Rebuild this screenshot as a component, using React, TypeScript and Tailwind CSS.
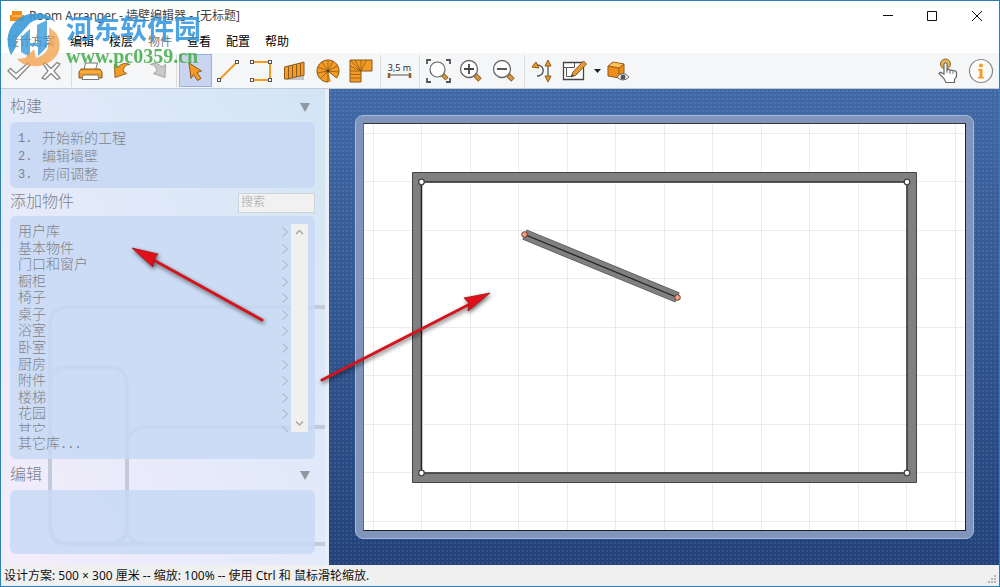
import { ReactNode } from 'react';

interface ToolProps {
  label: string;
  active?: boolean;
  children: ReactNode;
}

const Tool = ({ label, active, children }: ToolProps) => (
  <button
    type="button"
    aria-label={label}
    className={`h-[33px] w-[33px] shrink-0 ${active ? 'border border-[#98b1e0] bg-[#c9d5f0]' : 'border border-transparent'}`}
  >
    <svg viewBox="1 1 31 31" className="h-[31px] w-[31px]" fill="none">
      {children}
    </svg>
  </button>
);

const Separator = () => (
  <span className="flex w-[6px] shrink-0 justify-center">
    <span className="h-8 w-px bg-[#dcdcdc]" />
  </span>
);

const Magnifier = ({ children }: { children?: ReactNode }) => (
  <>
    <path d="M20 21l5 5" stroke="#8b6327" strokeWidth="5" />
    <path d="M20.5 21.5l4 4" stroke="#d99a3a" strokeWidth="3" />
    <circle cx="14" cy="15" r="8.5" fill="#fdfdfd" stroke="#666" strokeWidth="1.3" />
    {children}
  </>
);

const Toolbar = () => (
  <div className="flex h-9 items-center border-b border-[#c3cbd6] bg-[#f5f6f8] pl-px pr-[2px]">
    <Tool label="确定">
      <path d="M6 17l2.500-2.500 5.500 5L26 9l2 2-13.500 14z" fill="#fff" stroke="#888" strokeWidth="1.300" />
    </Tool>
    <Tool label="取消">
      <path d="M8 10l2-1.500 6 6 6-6 3 1.500-6 7 6 7-3 1.500-6-6-6 6-3-1.500 6-7z" fill="#fff" stroke="#888" strokeWidth="1.300" />
    </Tool>
    <Separator />
    <Tool label="打印">
      <path d="M10 16l1.500-7h12l-2 7z" fill="#fff" stroke="#777" />
      <path d="M7 15h19l2 3v6H5v-6z" fill="#f59a23" stroke="#8a5a1c" />
      <path d="M9 21h15l1 4.500H8z" fill="#fff" stroke="#777" />
      <path d="M6 18h21" stroke="#ffc266" />
    </Tool>
    <Tool label="撤销">
      <path d="M7.500 10.500l3.500 2.500c3.500-3.500 7-4.500 12-2.500-4 0-6 2-7 6.500l3.500 2.500L8 23.500z" fill="#f59a23" stroke="#9a6420" />
    </Tool>
    <Tool label="重做">
      <path d="M25.500 10.500L22 13c-3.500-3.500-7-4.500-12-2.500 4 0 6 2 7 6.500l-3.500 2.500L25 23.500z" fill="#c9c9c9" stroke="#a5a5a5" />
    </Tool>
    <Separator />
    <Tool label="选择" active>
      <path d="M10 9l12.500 8-4.500 1.500 4 6-3.500 2-4-6-2.500 4z" fill="#f59a23" stroke="#8a5a1c" />
    </Tool>
    <Tool label="墙壁">
      <path d="M7 26L25 8" stroke="#f59a23" strokeWidth="2" />
      <g fill="#fff" stroke="#555">
        <rect x="5.500" y="24.500" width="3" height="3" />
        <rect x="23.500" y="6.500" width="3" height="3" />
      </g>
    </Tool>
    <Tool label="房间">
      <path d="M7 8h18v18H7" stroke="#f59a23" strokeWidth="2" />
      <g fill="#fff" stroke="#555">
        <rect x="5.500" y="6.500" width="3" height="3" />
        <rect x="23.500" y="6.500" width="3" height="3" />
        <rect x="23.500" y="24.500" width="3" height="3" />
        <rect x="5.500" y="24.500" width="3" height="3" />
      </g>
    </Tool>
    <Tool label="直楼梯">
      <path d="M7 26h19v-4l-10 1z" fill="#c4c4c4" />
      <path
        d="M6.500 13l4-1v13h-4zM10.500 12l4-1v13l-4 .5zM14.500 11l4-1v13l-4 .5zM18.500 10l4-1v13l-4 .5zM22.500 9l3.500-1v13.500l-3.500.5z"
        fill="#f59a23"
        stroke="#8a5a1c"
      />
    </Tool>
    <Tool label="螺旋楼梯">
      <path d="M17 17l3 10.500A11 11 0 1 1 25.500 24z" fill="#f59a23" />
      <path d="M17 17v11A11 11 0 1 1 25.500 24z" fill="#f59a23" stroke="#8a5a1c" />
      <path d="M17 17V6M17 17L11 8M17 17L7 13M17 17l-11 2M17 17l-8 8M17 17l5-10M17 17l9-5M17 17l11 1" stroke="#8a5a1c" strokeWidth=".8" />
      <circle cx="17" cy="17" r="1.500" fill="#5c3b10" />
    </Tool>
    <Tool label="转角楼梯">
      <path d="M6 6h22v11H17v11H6z" fill="#f59a23" stroke="#8a5a1c" />
      <path d="M17 17V6M17 17L11 6M17 17L6 6M17 17L6 12M6 17h11M6 20.500h11M6 24h11M22.500 6L17 17" stroke="#8a5a1c" strokeWidth=".8" />
    </Tool>
    <Separator />
    <Tool label="尺寸">
      <text x="16.500" y="17" textAnchor="middle" fontSize="9" fill="#222" fontFamily="Open Sans, sans-serif">3,5 m</text>
      <path d="M6 21h21" stroke="#555" />
      <path d="M6 19v5M27 19v5" stroke="#8b6327" strokeWidth="2.500" />
    </Tool>
    <Separator />
    <Tool label="适合窗口">
      <path d="M5 10V6h4M24 6h4v4M28 24v4h-4M9 28H5v-4" stroke="#555" strokeWidth="1.800" />
      <path d="M20 20l5 5" stroke="#8b6327" strokeWidth="4.500" />
      <path d="M20.500 20.500l4 4" stroke="#d99a3a" strokeWidth="2.500" />
      <circle cx="15.500" cy="15.500" r="7.500" fill="#fdfdfd" stroke="#666" strokeWidth="1.200" />
    </Tool>
    <Tool label="放大">
      <Magnifier>
        <path d="M9 15h10M14 10v10" stroke="#444" strokeWidth="1.800" />
      </Magnifier>
    </Tool>
    <Tool label="缩小">
      <Magnifier>
        <path d="M9 15h10" stroke="#444" strokeWidth="1.800" />
      </Magnifier>
    </Tool>
    <Separator />
    <Tool label="旋转翻转">
      <path d="M8 11c6-1 9 3 8 7-1 3-3 4-6 4" stroke="#555" strokeWidth="1.300" />
      <path d="M5 13l4-5 3 6z" fill="#f59a23" stroke="#8a5a1c" />
      <path d="M21 11v12" stroke="#555" strokeWidth="1.300" />
      <path d="M21 6l3 6h-6zM21 28l3-6h-6z" fill="#e59a35" stroke="#8a5a1c" />
    </Tool>
    <Tool label="编辑方案">
      <path d="M3.500 8.500h20v17h-20z" fill="#fff" stroke="#444" strokeWidth="1.300" />
      <path d="M6.500 22.500v-9h8v-5M6.500 22.500h5M3.500 13.500h3" stroke="#555" />
      <path d="M11 23l2-5L23.500 7l3 3L16 21z" fill="#e59a35" stroke="#8a5a1c" />
      <path d="M11 23l1-3 2 2z" fill="#444" />
    </Tool>
    <button type="button" aria-label="更多编辑" className="flex w-[9px] justify-center">
      <svg viewBox="0 0 7 4" className="h-1 w-[7px]">
        <path d="M0 0h7L3.500 4z" fill="#222" />
      </svg>
    </button>
    <Tool label="三维视图">
      <path d="M6 12l5-4 11 2v9l-5 5-11-2z" fill="#f08c1a" stroke="#8a5a1c" />
      <path d="M6.500 12l5-3.500 10 2-5 3.200z" fill="#ffc05c" />
      <path d="M6 12l11 2 5-4M17 14v9" stroke="#8a5a1c" />
      <path d="M15 23q6-7 12 0-6 6-12 0z" fill="#fff" stroke="#666" />
      <circle cx="21" cy="23" r="2.500" fill="#555" />
    </Tool>
    <div className="grow" />
    <Tool label="触摸模式">
      <circle cx="14.500" cy="10" r="5" fill="#e5b35c" stroke="#8b6327" />
      <path d="M13 20V10q1.500-2.500 3 0v6q2-1.500 3 .5 2-1 3 .5 2.500-1 3.500 1.500v4l-2 3v3H15l-2-4-5-5q1-2 3-.5z" fill="#fff" stroke="#666" strokeWidth="1.200" />
      <path d="M19 17v3M22 17.500v2.500M16 16v3" stroke="#777" />
    </Tool>
    <Tool label="关于">
      <circle cx="17" cy="17" r="11.500" fill="#fcfcfc" stroke="#888" strokeWidth="1.200" />
      <circle cx="17" cy="11.500" r="2" fill="#f59a23" />
      <path d="M14 15h4.500v8H20v1.500h-6V23h1.500v-6.500H14z" fill="#f59a23" />
    </Tool>
  </div>
);

const menus = ['设计方案', '编辑', '楼层', '物件', '查看', '配置', '帮助'];

const steps = ['开始新的工程', '编辑墙壁', '房间调整'];

const libraries = [
  '用户库',
  '基本物件',
  '门口和窗户',
  '橱柜',
  '椅子',
  '桌子',
  '浴室',
  '卧室',
  '厨房',
  '附件',
  '楼梯',
  '花园',
  '其它',
];

const Watermark = () => (
  <div className="pointer-events-none absolute left-[5px] top-[11px] flex gap-1 opacity-90">
    <svg viewBox="0 0 56 56" className="h-14 w-14">
      <path d="M5 43C-4 24 6 5 24 2c13-2 22 2 26 8-9-5-19-4-26 1L10 27v8l-5 8z" fill="#3c9bd9" />
      <path d="M15 25l9-8v14h7V13l10-5v27l-9 9V34h-8v11l-9-5z" fill="#3c9bd9" opacity=".9" />
      <path d="M43 15l7 6c9 14 1 30-17 33-10 1-18-2-22-7l8-1 9-9 2 9c8-2 13-8 13-17z" fill="#f2a24a" opacity=".85" />
    </svg>
    <div className="flex flex-col">
      <span className="font-['Noto_Sans_CJK_SC',sans-serif] text-[27px] font-bold leading-8 text-[#3b9be0]">河东软件园</span>
      <span className="font-['Liberation_Serif',serif] text-[20px] font-bold leading-6 text-[#4caf50]">www.pc0359.cn</span>
    </div>
  </div>
);

const TitleBar = () => (
  <header className="bg-white">
    <div className="flex h-[30px] items-center pl-2">
      <svg viewBox="0 0 16 16" className="mr-1 h-4 w-4">
        <path d="M3 3h10v4h2v6H1V7h2z" fill="#f08c1a" />
        <path d="M3 8h10" stroke="#ffd08a" />
      </svg>
      <h1 className="grow text-xs text-[#444]">Room Arranger - 墙壁编辑器 - [无标题]</h1>
      <button type="button" aria-label="最小化" className="flex h-full w-11 items-center justify-center">
        <svg viewBox="0 0 10 10" className="h-[10px] w-[10px]" stroke="#111"><path d="M0 4.500h10" /></svg>
      </button>
      <button type="button" aria-label="最大化" className="flex h-full w-11 items-center justify-center">
        <svg viewBox="0 0 10 10" className="h-[10px] w-[10px]" fill="none" stroke="#111"><path d="M.5.5h9v9h-9z" /></svg>
      </button>
      <button type="button" aria-label="关闭" className="flex h-full w-[45px] items-center justify-center">
        <svg viewBox="0 0 10 10" className="h-[10px] w-[10px]" stroke="#111"><path d="M0 0l10 10M10 0L0 10" /></svg>
      </button>
    </div>
    <nav className="flex h-[22px] items-center gap-[15px] pl-[6px] text-xs text-black">
      {menus.map((menu) => (
        <button
          key={menu}
          type="button"
          className={menu === '设计方案' || menu === '物件' ? 'text-[#777]' : ''}
        >
          {menu}
        </button>
      ))}
    </nav>
  </header>
);

const Collapse = ({ label }: { label: string }) => (
  <button type="button" aria-label={label} className="mr-[5px]">
    <svg viewBox="0 0 10 9" className="h-[9px] w-[10px]">
      <path d="M0 0h10L5 9z" fill="#9097a0" />
    </svg>
  </button>
);

// Room outlines printed faintly behind the panels
const SidebarArt = () => (
  <svg
    viewBox="0 0 324 476"
    preserveAspectRatio="xMinYMax slice"
    className="absolute inset-0 h-full w-full"
    fill="none"
    stroke="#c3cadb"
    strokeWidth="4"
  >
    <path d="M324 218H68q-19 0-19 19v199q0 19 19 19h256" />
    <path d="M49 297q0-19 19-19h39q19 0 19 19v139q0 19-19 19H68" />
    <path d="M324 338H145q-19 0-19 19v79q0 19 19 19" />
  </svg>
);

const Sidebar = () => (
  <aside className="relative w-[324px] shrink-0 bg-linear-to-tr from-[#f4ecfb] via-[#e3eafa] to-[#d2e5f4] font-['Liberation_Mono','Noto_Sans_CJK_SC',monospace] text-[14px] font-light text-[#7d8288]">
    <SidebarArt />
    <div className="relative pl-[9px] pr-[10px]">
      <div className="flex h-[33px] items-center justify-between pt-1">
        <h2 className="text-base">构建</h2>
        <Collapse label="折叠构建" />
      </div>
      <ol className="rounded-md bg-[#c5d7f3]/85 px-2 pb-1 pt-2">
        {steps.map((step, index) => (
          <li key={step} className="flex leading-[18px]">
            <span className="w-6 text-xs leading-[18px]">{index + 1}.</span>
            <button type="button" className="h-[18px]">{step}</button>
          </li>
        ))}
      </ol>
      <div className="flex h-[28px] items-center justify-between pt-px">
        <h2 className="text-base">添加物件</h2>
        <input
          type="text"
          aria-label="搜索"
          placeholder="搜索"
          className="h-5 w-[77px] border border-[#d0d4da] bg-[#f1f1f2] px-[2px] text-xs placeholder:text-[#a3a3a3]"
        />
      </div>
      <div className="rounded-md bg-[#c8d9f5]/85 pb-[3px] pl-2 pr-[7px] pt-2">
        <div className="flex h-[208px] overflow-hidden">
          <ul className="flex h-[215px] grow flex-col">
            {libraries.map((library) => (
              <li key={library} className="min-h-0 flex-1">
                <button type="button" className="flex h-full w-full items-center justify-between pr-[3px] leading-4">
                  {library}
                  <svg viewBox="0 0 6 10" className="h-[10px] w-[6px]" fill="none" stroke="#a3abb8">
                    <path d="M.5.5L5.500 5 .5 9.500" />
                  </svg>
                </button>
              </li>
            ))}
          </ul>
          <div className="flex w-[17px] flex-col justify-between bg-[#f0f0f0]">
            {['M1 5l3.500-3.500L8 5', 'M1 1.500L4.500 5 8 1.500'].map((path, index) => (
              <button key={path} type="button" aria-label={index ? '向下滚动' : '向上滚动'} className="flex h-[17px] items-center justify-center">
                <svg viewBox="0 0 9 7" className="h-[7px] w-[9px]" fill="none" stroke="#a8a8a8" strokeWidth="1.500">
                  <path d={path} />
                </svg>
              </button>
            ))}
          </div>
        </div>
        <button type="button" className="block h-6 leading-6">
          其它库<span className="text-xs">...</span>
        </button>
      </div>
      <div className="flex h-[31px] items-center justify-between pt-[2px]">
        <h2 className="text-base">编辑</h2>
        <Collapse label="折叠编辑" />
      </div>
      <div className="h-16 rounded-md bg-[#c8d9f5]/85" />
    </div>
  </aside>
);

const gridColumns = [10, 58, 107, 155, 204, 252, 301, 349, 398, 446, 495, 543, 592];
const gridRows = [10, 58, 107, 155, 204, 252, 301, 349, 398];

const Plan = () => (
  <svg viewBox="0 0 601 406" preserveAspectRatio="xMinYMin meet" className="h-full w-full" fill="none">
    <g stroke="#ececec">
      {gridColumns.map((x) => (
        <path key={x} d={`M${x - 0.5} 0V406`} />
      ))}
      {gridRows.map((y) => (
        <path key={y} d={`M0 ${y - 0.5}H601`} />
      ))}
    </g>
    <path d="M53 53H548v301H53z" stroke="#808080" strokeWidth="9" />
    <path d="M48.500 48.500h504v310h-504z" stroke="#444" />
    <path d="M57.500 58h485.500v291H57.500z" fill="#fff" stroke="#222" strokeWidth="1.500" />
    <g stroke="#ececec">
      {gridColumns.slice(2, 11).map((x) => (
        <path key={x} d={`M${x - 0.5} 60V348`} />
      ))}
      {gridRows.slice(2, 7).map((y) => (
        <path key={y} d={`M60 ${y - 0.5}H542`} />
      ))}
    </g>
    <g fill="#fff" stroke="#444" strokeWidth="1.300">
      <circle cx="57.500" cy="58" r="2.800" />
      <circle cx="543" cy="58" r="2.800" />
      <circle cx="57.500" cy="349" r="2.800" />
      <circle cx="543" cy="349" r="2.800" />
    </g>
    <path d="M160.500 110.500L313.500 173.500" stroke="#555" strokeWidth="11" />
    <path d="M161 110.700L313 173.300" stroke="#808080" strokeWidth="9.500" />
    <path d="M160.500 110.500L313.500 173.500" stroke="#222" strokeWidth="1.300" />
    <g fill="#f5a282" stroke="#6b3a2c">
      <circle cx="160.500" cy="110.500" r="2.800" />
      <circle cx="313.500" cy="173.500" r="2.800" />
    </g>
  </svg>
);

const Workspace = () => (
  <main className="min-w-0 grow bg-linear-to-b from-[#4069a5] to-[#23427b]">
    <div className="flex h-full bg-[radial-gradient(#ffffff14_1px,transparent_1px)] bg-size-[4px_4px] py-[26px] pl-[26px] pr-[25px]">
      <div className="flex grow rounded-lg border border-[#a3b9dd] bg-[#8194bb] p-[7px]">
        <div className="grow border border-[#222] border-l-[#666] border-t-[#333] bg-white">
          <Plan />
        </div>
      </div>
    </div>
  </main>
);

// Red pointers drawn over the whole window
const Pointers = () => (
  <svg className="pointer-events-none absolute -left-px -top-px h-[400px] w-[500px] drop-shadow-[1px_2px_2px_rgba(0,0,0,0.6)]" viewBox="0 0 500 400">
    <g stroke="#d4141c" strokeWidth="3" strokeLinecap="round">
      <path d="M150 258L262 320" />
      <path d="M322 380L472 303" />
    </g>
    <g fill="#e0101a" stroke="#a80f14" strokeWidth=".8">
      <path d="M132 248l26 6-4 5-1 8z" />
      <path d="M490 293l-26 5 5 5-1 8z" />
    </g>
  </svg>
);

export default function App() {
  return (
    <div className="relative flex min-h-screen flex-col border border-[#2c80b8] bg-[#f0f0f0] font-['Noto_Sans','Noto_Sans_CJK_SC',sans-serif]">
      <TitleBar />
      <Toolbar />
      <div className="flex grow">
        <Sidebar />
        <div className="w-1 shrink-0 bg-[#e9eef4]" />
        <Workspace />
      </div>
      <footer className="flex h-[21px] items-center justify-between pl-[3px] text-xs text-[#111]">
        <p>设计方案: 500 × 300 厘米 -- 缩放: 100% -- 使用 Ctrl 和 鼠标滑轮缩放.</p>
        <svg viewBox="0 0 12 12" className="h-3 w-3 self-end" fill="#b5b5b5">
          <path d="M7 1h2v2H7zM7 4h2v2H7zM4 4h2v2H4zM7 7h2v2H7zM4 7h2v2H4zM1 7h2v2H1z" />
        </svg>
      </footer>
      <Watermark />
      <Pointers />
    </div>
  );
}
